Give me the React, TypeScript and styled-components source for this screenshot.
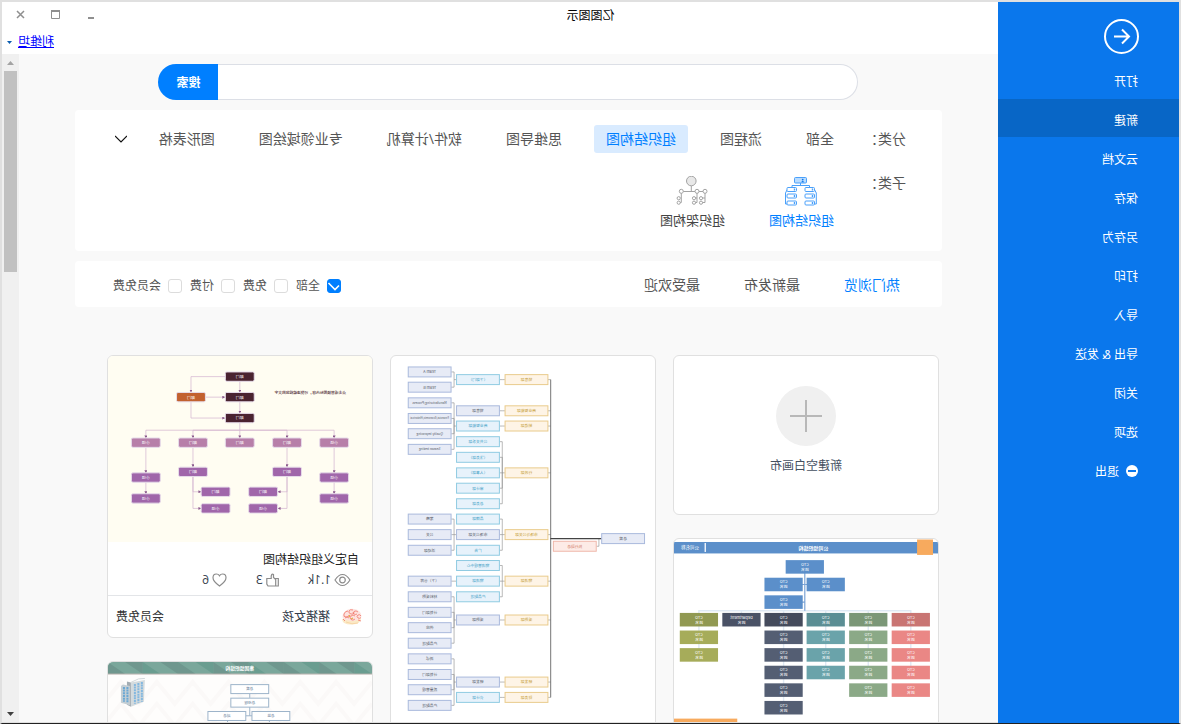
import React, { useState } from "react";
import styled, { createGlobalStyle } from "styled-components";

const GlobalStyle = createGlobalStyle`
  *, *::before, *::after { box-sizing: border-box; }
  body {
    margin: 0;
    background: #ffffff;
    font-family: "Open Sans", "Noto Sans CJK SC", sans-serif;
    font-size: 12px;
    line-height: 20px;
    color: #333333;
  }
  button, input { font-family: inherit; font-size: inherit; line-height: inherit; }
`;

/* ---------- window frame ---------- */

/* The whole window is shown as a mirror image. */
const Frame = styled.div`
  display: flex;
  height: 100vh;
  border: 2px solid #e0e0e0;
  border-bottom: 1px solid #222222;
  background: #ffffff;
  overflow: hidden;
  transform: scaleX(-1);
`;

const Sidebar = styled.nav`
  flex: none;
  width: 181px;
  background: #0a77ec;
  color: #ffffff;
`;

const PlainButton = styled.button`
  display: flex;
  align-items: center;
  margin: 0;
  padding: 0;
  border: 0;
  background: none;
  color: inherit;
  text-align: left;
  white-space: nowrap;
  cursor: pointer;
`;

const BackButton = styled(PlainButton)`
  margin: 17px 0 5px 39px;
`;

const MenuItem = styled(PlainButton)<{ $active?: boolean }>`
  width: 100%;
  height: 38px;
  margin-bottom: 1px;
  padding: 5px 0 0 41px;
  gap: 7px;
  background: ${(p) => (p.$active ? "#0866c6" : "transparent")};
`;

const Workspace = styled.div`
  flex: 1;
  min-width: 0;
  display: flex;
  flex-direction: column;
`;

const TitleBar = styled.header`
  flex: none;
  display: flex;
  height: 26px;
  align-items: center;
`;

const WindowTitle = styled.div`
  flex: 1;
  padding-top: 2px;
  text-align: center;
  color: #000000;
`;

const WindowControls = styled.div`
  width: 181px;
  display: flex;
  justify-content: flex-end;
`;

const ControlButton = styled(PlainButton)`
  width: 36px;
  height: 24px;
  justify-content: center;
`;

const UserBar = styled.div`
  flex: none;
  display: flex;
  align-items: center;
  justify-content: flex-end;
  gap: 6px;
  height: 26px;
  padding: 2px 5px 0 0;
`;

const UserLink = styled.a`
  color: #0000ff;
  text-decoration: underline;
`;

const Body = styled.div`
  flex: 1;
  min-height: 0;
  display: flex;
  border-bottom: 1px solid #e0e0e0;
  background: #f9f9f9;
`;

const Content = styled.main`
  flex: 1;
  min-width: 0;
  padding: 10px 56px 0;
  overflow: hidden;
`;

const ScrollTrack = styled.div`
  flex: none;
  width: 17px;
  display: flex;
  flex-direction: column;
  justify-content: space-between;
  align-items: center;
  background: #f0f0f0;
`;

const ScrollTop = styled.div`
  display: flex;
  flex-direction: column;
  align-items: center;
`;

const ArrowBox = styled.div`
  display: flex;
  align-items: center;
  justify-content: center;
  height: 17px;
`;

const ScrollThumb = styled.div`
  width: 13px;
  height: 201px;
  background: #c1c1c1;
`;

/* ---------- search and filters ---------- */

const SearchForm = styled.form`
  display: flex;
  max-width: 700px;
  height: 36px;
  margin: 0 auto 10px;
`;

const SearchInput = styled.input`
  flex: 1;
  min-width: 0;
  padding: 0 18px;
  border: 1px solid #dcdfe6;
  border-right: 0;
  border-radius: 18px 0 0 18px;
  background: #ffffff;
  outline: none;
`;

const SearchButton = styled.button`
  width: 60px;
  padding: 2px 0 0;
  border: 0;
  border-radius: 0 18px 18px 0;
  background: #007fff;
  color: #ffffff;
  font-weight: 700;
`;

const Panel = styled.section`
  margin-bottom: 10px;
  border-radius: 4px;
  background: #ffffff;
  color: #555555;
  font-size: 14px;
`;

const FilterPanel = styled(Panel)`
  height: 141px;
  padding: 15px 40px 0 36px;
`;

const FilterRow = styled.div`
  display: flex;
  align-items: flex-start;
  margin-bottom: 16px;
`;

const RowLabel = styled.div`
  width: 60px;
  line-height: 28px;
`;

const CategoryList = styled.div`
  flex: 1;
  display: flex;
  gap: 20px;
`;

const Category = styled(PlainButton)<{ $active?: boolean }>`
  height: 28px;
  padding: 0 12px;
  border-radius: 3px;
  background: ${(p) => (p.$active ? "#d9ebff" : "transparent")};
  color: ${(p) => (p.$active ? "#007fff" : "inherit")};
`;

const ExpandButton = styled(PlainButton)`
  height: 28px;
`;

const SubcategoryList = styled.div`
  display: flex;
  gap: 44px;
  padding: 7px 0 0 12px;
`;

const Subcategory = styled(PlainButton)<{ $active?: boolean }>`
  flex-direction: column;
  gap: 2px;
  font-size: 13px;
  color: ${(p) => (p.$active ? "#007fff" : "#444444")};
`;

const SortPanel = styled(Panel)`
  display: flex;
  align-items: center;
  justify-content: space-between;
  height: 46px;
  margin-bottom: 48px;
  padding: 2px 38px 0 42px;
`;

const SortTabs = styled.div`
  display: flex;
  gap: 44px;
`;

const SortTab = styled(PlainButton)<{ $active?: boolean }>`
  color: ${(p) => (p.$active ? "#007fff" : "inherit")};
`;

const PriceFilters = styled.div`
  display: flex;
  gap: 8px;
  padding-top: 1px;
  font-size: 12px;
`;

const CheckLabel = styled.label`
  display: flex;
  align-items: center;
  gap: 7px;
`;

const CheckBoxWrap = styled.span`
  display: grid;
  width: 14px;
  height: 14px;
  > * { grid-area: 1 / 1; }
`;

const CheckBox = styled.input`
  appearance: none;
  width: 14px;
  height: 14px;
  margin: 0;
  border: 1px solid #dcdcdc;
  border-radius: 3px;
  background: #ffffff;
  &:checked { border-color: #007fff; background: #007fff; }
`;

/* ---------- template gallery ---------- */

const Gallery = styled.div`
  display: grid;
  grid-template-columns: repeat(3, minmax(0, 1fr));
  gap: 17px;
  padding: 0 32px 0 3px;
`;

const GalleryColumn = styled.div`
  display: flex;
  flex-direction: column;
  gap: 23px;
`;

const Card = styled.article`
  border: 1px solid #e0e0e0;
  border-radius: 6px;
  background: #ffffff;
  overflow: hidden;
`;

const BlankCard = styled(Card)`
  height: 160px;
`;

const BlankButton = styled(PlainButton)`
  flex-direction: column;
  width: 100%;
  padding-top: 30px;
  gap: 10px;
  color: #444f5f;
`;

const PlusCircle = styled.span`
  display: flex;
  align-items: center;
  justify-content: center;
  width: 60px;
  height: 60px;
  border-radius: 50%;
  background: #f0f0f0;
`;

const Thumb = styled.svg`
  display: block;
  width: 100%;
  height: auto;
  font-family: "Noto Sans CJK SC", sans-serif;
`;

const CardInfo = styled.div`
  padding: 8px 13px 5px;
  border-bottom: 1px solid #e3e5e8;
`;

const CardTitle = styled.h3`
  margin: 0;
  font-size: 12px;
  font-weight: 400;
  color: #222222;
`;

const Stats = styled.div`
  display: flex;
  gap: 29px;
  padding-left: 8px;
  color: #333c4a;
`;

const Stat = styled.span`
  display: flex;
  align-items: center;
  gap: 3px;
`;

const CardFooter = styled.div`
  display: flex;
  align-items: center;
  gap: 11px;
  height: 41px;
  padding: 0 8px 0 10px;
`;

const Author = styled.span`
  flex: 1;
  color: #333c4a;
`;

/* ---------- drawings ---------- */

type NodeProps = {
  x: number;
  y: number;
  w: number;
  h: number;
  fill: string;
  stroke?: string;
  color?: string;
  size?: number;
  radius?: number;
  lines: string[];
};

/* A labelled box centred on (x, y). */
const Node = ({ x, y, w, h, fill, stroke, color = "#fff", size = 4, radius = 0, lines }: NodeProps) => (
  <g>
    <rect x={x - w / 2} y={y - h / 2} width={w} height={h} rx={radius} fill={fill} stroke={stroke} />
    {lines.map((t, i) => (
      <text
        key={i}
        x={x}
        y={y + (i - (lines.length - 1) / 2) * 5 + size * 0.36}
        fontSize={size}
        fill={color}
        textAnchor="middle"
      >
        {t}
      </text>
    ))}
  </g>
);

const rowY = (r: number) => 28 + r * 17.67;
const orgColumns = [
  { x: 27.3, head: "#c97573", body: "#ea8785", count: 4, name: "CTO" },
  { x: 70, head: "#7b9777", body: "#8ba987", count: 4, name: "CTO" },
  { x: 112.7, head: "#5b8e94", body: "#6aa3aa", count: 3, name: "CTO" },
  { x: 155, head: "#454b5c", body: "#545e73", count: 5, name: "CTO" },
  { x: 197.3, head: "#4a5266", body: "#545e73", count: 0, name: "Department" },
  { x: 240, head: "#919952", body: "#a6ac5a", count: 2, name: "CTO" },
];

const OrgChartThumb = () => (
  <Thumb viewBox="0 0 265 230" aria-hidden="true">
    <rect y="3" width="265" height="11.5" fill="#5b8fca" />
    <rect x="5" y="0.5" width="16" height="15.5" fill="#f7aa5e" />
    <text x="125" y="10.6" fontSize="5" fontWeight="700" fill="#fff" textAnchor="middle">公司组织结构</text>
    <rect x="233" y="4" width="1.3" height="9" fill="#fff" />
    <text x="249" y="10.5" fontSize="4.5" fill="#fff" textAnchor="middle">公司名称</text>
    <g stroke="#dfe9f4" strokeWidth="1.4" fill="none">
      <path d="M27.3 81V72H240V116M197.3 81V72M27.3 81V134M70 72V134M112.7 72V134M155 72V169" />
    </g>
    <path d="M133.7 30V72M113 45.7H155M133.7 63.3H155" stroke="#7ba4d5" strokeWidth="1.2" fill="none" />
    {[[133.7, 0], [155, 1], [112.7, 1], [155, 2]].map(([x, r]) => (
      <Node key={`${x}-${r}`} x={x} y={rowY(r)} w={38.4} h={13.6} fill="#5b8fca" lines={["CTO", "姓名"]} />
    ))}
    {orgColumns.map((c) => (
      <g key={c.x}>
        <Node x={c.x} y={rowY(3)} w={38.4} h={13.6} fill={c.head} lines={[c.name, "姓名"]} />
        {Array.from({ length: c.count }, (_, i) => (
          <Node key={i} x={c.x} y={rowY(4 + i)} w={38.4} h={13.6} fill={c.body} lines={["CTO", "姓名"]} />
        ))}
      </g>
    ))}
    <rect x="201.5" y="180.3" width="63.5" height="20" fill="#f7aa5e" />
  </Thumb>
);

type TreeItem = [y: number, text: string, tone: "blue" | "cyan" | "amber" | "rose", size?: number];
const tones = {
  blue: { fill: "#e7ebf6", stroke: "#a9b9dc", color: "#555a66" },
  cyan: { fill: "#e7f2fb", stroke: "#8fcbe2", color: "#3f9fc6" },
  amber: { fill: "#fef4e6", stroke: "#e9cb8c", color: "#c49a32" },
  rose: { fill: "#fdebe7", stroke: "#efb8ab", color: "#cf7560" },
};

const level1: TreeItem[] = [
  [23.7, "销售部", "amber"], [55, "商业智能部", "amber"], [70.3, "制造部", "amber"],
  [117.3, "行政部", "amber"], [179.3, "市场与公关部", "amber"], [226, "物流部", "amber"],
  [265, "采购部", "amber"], [327.3, "研发部", "amber"], [342.7, "财务部", "amber"],
];
const level2: TreeItem[] = [
  [23.7, "（下部门）", "cyan"], [55, "销售部", "blue"], [70.3, "商业智能部", "cyan"],
  [86, "公共关系部", "cyan"], [101.7, "（法务部）", "cyan"], [117.3, "（人事部）", "cyan"],
  [132.7, "审计部", "cyan"], [148.3, "总务部", "cyan"], [163.7, "品牌部", "cyan"],
  [179.3, "市场公关部", "blue"], [195, "广告", "cyan"], [210.3, "物流管理中心", "cyan"],
  [226, "物流部", "cyan"], [241.7, "产品配送", "cyan"], [265, "采购部", "blue"],
  [327.3, "研发部", "blue"], [342.7, "会计部", "cyan"],
];
const level3: TreeItem[] = [
  [16, "Team A", "blue"], [31.3, "Team B", "blue"], [47, "Manufacturing/Process", "blue", 3.2],
  [62.7, "Financial/Economic/Historical", "blue", 2.8], [78, "Quality improving", "blue", 3.2], [93.7, "Season testing", "blue", 3.2],
  [163.7, "策略", "blue"], [179.3, "公关", "blue"], [195, "活动部", "blue"],
  [226, "（下）仓库", "blue"], [241.7, "材料采购", "blue"], [257.3, "计划部门", "blue"],
  [272.7, "供应", "blue"], [288.3, "产品配送", "blue"], [304, "测试", "blue"],
  [319.7, "计划部门", "blue"], [335, "质量管理", "blue"], [350.7, "产品配送", "blue"],
];
const branches12: [number, number[]][] = [
  [23.7, [23.7]], [55, [55]], [70.3, [70.3]], [117.3, [86, 101.7, 117.3, 132.7, 148.3]],
  [179.3, [163.7, 179.3, 195]], [226, [210.3, 226, 241.7]], [265, [265]], [327.3, [327.3]], [342.7, [342.7]],
];
const branches23: [number, number[]][] = [
  [23.7, [16, 31.3]], [70.3, [47, 62.7, 78, 93.7]], [179.3, [163.7, 179.3, 195]],
  [226, [226]], [265, [241.7, 257.3, 272.7, 288.3]], [327.3, [304, 319.7, 335, 350.7]],
];

const branchPath = (from: number, mid: number, to: number, groups: [number, number[]][]) =>
  groups
    .map(([y, kids]) => `M${from} ${y}H${mid}` + kids.map((k) => `M${mid} ${y}V${k}H${to}`).join(""))
    .join("");

const TreeNodes = ({ x, items }: { x: number; items: TreeItem[] }) => (
  <>
    {items.map(([y, text, tone, size = 3.8]) => (
      <Node key={y} x={x} y={y} w={43} h={10} {...tones[tone]} size={size} lines={[text]} />
    ))}
  </>
);

const TreeThumb = () => (
  <Thumb viewBox="0 0 265 420" aria-hidden="true">
    <g stroke="#8a8a8a" strokeWidth="0.6" fill="none">
      <path d={branchPath(150.7, 153.3, 156, branches12)} />
      <path d={branchPath(199.7, 201.7, 204.5, branches23)} />
      <path d={level1.map(([y]) => `M104.7 ${y}H107.5`).join("")} />
      <path d="M53.7 183.3H56.3V191H58.7" />
    </g>
    <path d="M104.7 23.7V342.7" stroke="#666" strokeWidth="0.9" />
    <path d="M53.7 183.3H105" stroke="#444" strokeWidth="1.2" />
    <TreeNodes x={32} items={[[183.3, "总裁", "blue"]]} />
    <TreeNodes x={80.5} items={[[191, "执行副总", "rose"]]} />
    <TreeNodes x={129} items={level1} />
    <TreeNodes x={177.7} items={level2} />
    <TreeNodes x={226.2} items={level3} />
  </Thumb>
);

const CustomOrgThumb = () => {
  const node = (x: number, y: number, fill: string, text = "部门") => (
    <Node key={`${x}-${y}`} x={x} y={y} w={29} h={9.4} radius={1.5} fill={fill} stroke="#e6dcea" size={4} lines={[text]} />
  );
  return (
    <Thumb viewBox="0 0 265 187" aria-hidden="true">
      <defs>
        <marker id="tip" viewBox="0 0 4 4" refX="3" refY="2" markerWidth="3" markerHeight="3" markerUnits="userSpaceOnUse" orient="auto">
          <path d="M0 0L4 2L0 4Z" fill="#8a5a8c" />
        </marker>
      </defs>
      <rect width="265" height="187" fill="#fffdf2" />
      <g stroke="#d3b3d0" strokeWidth="0.7" fill="none">
        {[
          "M132.7 20V36", "M132.7 41V57", "M147 20.7H181.7V36", "M167 41.3H148", "M181.7 46V62.3H148",
          "M132.7 67V82", "M132.7 74.5H38V82", "M132.7 74.5H85.3V82", "M132.7 74.5H179.7V82", "M132.7 74.5H227V82",
          "M38 92V117", "M38 127V138", "M227 92V117", "M227 127V138", "M85.3 92V111", "M179.7 92V111",
          "M85.3 121V136.3H94", "M85.3 121V153H94", "M179.7 121V136.3H172", "M179.7 121V153H172",
        ].map((d) => (
          <path key={d} d={d} markerEnd="url(#tip)" />
        ))}
      </g>
      {[20.7, 41.3, 62.3].map((y) => node(132.7, y, "#4a2330"))}
      {node(181.7, 41.3, "#c2612f")}
      {[38, 85.3, 132.7, 179.7, 227].map((x) => node(x, 87, "#b77fa9", x === 38 || x === 227 ? "小组" : "部门"))}
      {[[38, 122], [38, 143], [85.3, 116.3], [179.7, 116.3], [227, 122], [227, 143], [109.3, 136.3], [109.3, 153], [157, 136.3], [157, 153]].map(
        ([x, y]) => node(x, y, "#a066aa", y === 116.3 || y === 136.3 ? "部门" : "小组")
      )}
      <text x="62" y="38.2" fontSize="3.8" fontWeight="500" fill="#4a2330" textAnchor="middle">
        点击或替换图标内容，可快速编辑您的文字
      </text>
    </Thumb>
  );
};

const CompanyThumb = () => (
  <Thumb viewBox="0 0 265 120" aria-hidden="true">
    <rect width="265" height="120" fill="#fefdfc" />
    <g stroke="#fbf9f8" strokeWidth="4" fill="none">
      {[20, 42, 64, 86].map((y) => (
        <path key={y} d={`M0 ${y}` + Array.from({ length: 15 }, (_, i) => `L${(i + 1) * 18} ${y + (i % 2 ? 0 : 22)}`).join("")} />
      ))}
    </g>
    <rect width="265" height="12" fill="#7aa79b" />
    {Array.from({ length: 15 }, (_, i) => (
      <path
        key={i}
        d={i % 2 ? `M${i * 17.7} 0h17.7L${i * 17.7} 12Z` : `M${i * 17.7} 12h17.7V0Z`}
        fill={i % 3 ? "#6f978e" : "#6a9d90"}
      />
    ))}
    <rect y="11.6" width="265" height="1" fill="#b9b4ae" />
    <text x="132.7" y="8.4" fontSize="4.8" fontWeight="700" fill="#fff" textAnchor="middle">集团组织结构</text>
    <path d="M122.7 32V36M122.7 45V54M120 54H127M103 59V66M145 59V66" stroke="#9db4ca" fill="none" />
    {([[122.7, 27.2, "总裁"], [122.7, 40.8, "总经理"], [145.7, 54.2, "副总"], [101.5, 54.2, "总监"]] as [number, number, string][]).map(
      ([x, y, t]) => <Node key={t} x={x} y={y} w={38} h={9} fill="#fff" stroke="#9db4ca" color="#5c7894" size={3.6} lines={[t]} />
    )}
    <path d="M228 18L242 20.5V45L229 40Z" fill="#d3dadd" />
    <path d="M242 20.5L246 19.5V43L242 45Z" fill="#a3acb2" />
    <path d="M243 24L250 22.5L252 24V41L243 43.5Z" fill="#c4ced4" />
    <path d="M228 16.5Q234 15.5 242 20.5" stroke="#d3d8da" strokeWidth="1" fill="none" />
    <path d="M231 20V40M234.5 21V41M238 22V42" stroke="#84b8df" strokeWidth="2" strokeDasharray="2 0.7" />
    <path d="M245.5 25V41M249 25V40" stroke="#6ba8d4" strokeWidth="2" strokeDasharray="2 0.7" />
  </Thumb>
);

const OrgStructureIcon = () => (
  <svg width="32" height="32" viewBox="0 0 32 32" fill="none" stroke="#4aa0fa" aria-hidden="true">
    <rect x="10.5" y="1.5" width="12" height="5.5" rx="1" fill="#b9dcff" />
    <circle cx="14.3" cy="3.6" r="0.9" fill="#0a77ec" stroke="none" />
    <path d="M12.8 6.2q1.5-2.4 3 0z" fill="#0a77ec" stroke="none" />
    <path d="M16.5 7v2.5M7.5 11.500V9.500H25V11.500M2.5 13.500L.7 17V28h1.8M29.800 13.500L31.500 17V28h-1.800" />
    {[11.5, 18, 25].map((y) => (
      <g key={y} fill="#ffffff">
        <rect x="2.5" y={y} width="9.5" height="4" rx="1" />
        <rect x="20.5" y={y} width="9.5" height="4" rx="1" />
        <path d={`M4.5 ${y + 1}v2M22.5 ${y + 1}v2`} strokeWidth="1.4" />
      </g>
    ))}
  </svg>
);

const OrgFrameworkIcon = () => (
  <svg width="32" height="32" viewBox="0 0 32 32" fill="none" stroke="#a3a3a3" aria-hidden="true">
    <path d="M16.7 10v5M3 15.5h24M3 15v11.5h3M11 15v11.5h3M26.7 15v11.5h1.5M3 22h3M11 22h3" />
    <circle cx="16.7" cy="5" r="4.8" fill="#e8e8e8" />
    <g fill="#ffffff">
      {[3, 11, 26.7].map((x) => <circle key={x} cx={x} cy="15.3" r="2" />)}
      {[7, 14, 29.3].map((x) => (
        <g key={x}>
          <circle cx={x} cy="22.2" r="1.6" />
          <circle cx={x} cy="26.7" r="1.6" />
        </g>
      ))}
    </g>
  </svg>
);

const AvatarIcon = () => (
  <svg width="21" height="17" viewBox="0 0 21 17" aria-hidden="true">
    <path d="M1 10q0 6 9 6.5t10-5l-3-2-7 3z" fill="#fbe9c6" />
    <path d="M.5 8Q1 2 8 1t11 5q2 5-3 6-8 2-13-.5Q.3 10 .5 8z" fill="#fde3df" />
    <g stroke="#f0776b" strokeWidth="0.8" fill="none">
      <path d="M1 8q1-2 3-1t0 3q-2 1-3-.5M4 4q2-2 4-.5T8 6 5 6M9 2q3-1 4 1t-2 3-3-2M14 3q3 0 4 3t-2 3-3-2M7 8q2-2 4 0t0 3.5T7 11M13 10q2-2 4 0M1 13l3-1M17 13l2-2" />
    </g>
    <path d="M9 10l2 1M12 7l1 2" stroke="#e0aa45" strokeWidth="1.200" />
    <path d="M4 15q6 2 12-1" stroke="#f6d6a6" strokeWidth="1" fill="none" />
  </svg>
);

const menu = ["打开", "新建", "云文档", "保存", "另存为", "打印", "导入", "导出 & 发送", "关闭", "选项"];
const categories = ["全部", "流程图", "组织结构图", "思维导图", "软件/计算机", "专业领域绘图", "图形表格"];
const sorts = ["热门浏览", "最新发布", "最受欢迎"];
const prices = ["全部", "免费", "付费", "会员免费"];

export default function App() {
  const [section, setSection] = useState("新建");
  const [category, setCategory] = useState("组织结构图");
  const [sort, setSort] = useState("热门浏览");
  const [price, setPrice] = useState("全部");

  return (
    <>
      <GlobalStyle />
      <Frame>
        <Sidebar>
          <BackButton aria-label="返回">
            <svg width="37" height="36" viewBox="0 0 37 36" fill="none" stroke="#fff" strokeWidth="2">
              <circle cx="18.5" cy="17.5" r="16.5" />
              <path d="M26 17.5H11.5M18 10.5l-7 7 7 7" />
            </svg>
          </BackButton>
          {menu.map((m) => (
            <MenuItem key={m} $active={m === section} onClick={() => setSection(m)}>{m}</MenuItem>
          ))}
          <MenuItem>
            <svg width="12" height="14" viewBox="0 0 12 14" aria-hidden="true">
              <circle cx="6" cy="6" r="6" fill="#fff" />
              <rect x="2" y="5" width="8" height="2" fill="#0a77ec" />
            </svg>
            退出
          </MenuItem>
        </Sidebar>

        <Workspace>
          <TitleBar>
            <WindowTitle>亿图图示</WindowTitle>
            <WindowControls>
              <ControlButton aria-label="最小化">
                <svg width="10" height="10" viewBox="0 0 10 10"><rect x="3" y="7" width="6" height="2" fill="#8f8f8f" /></svg>
              </ControlButton>
              <ControlButton aria-label="最大化">
                <svg width="10" height="10" viewBox="0 0 10 10"><path d="M1.500 0V8.500H9.500V0" fill="none" stroke="#8f8f8f" /><rect x="1" width="9" height="2" fill="#8f8f8f" /></svg>
              </ControlButton>
              <ControlButton aria-label="关闭窗口">
                <svg width="10" height="10" viewBox="0 0 10 10"><path d="M1 1l7 7M8 1l-7 7" stroke="#8f8f8f" strokeWidth="1.500" /></svg>
              </ControlButton>
            </WindowControls>
          </TitleBar>
          <UserBar>
            <UserLink href="#user">利维坦</UserLink>
            <svg width="5" height="3" viewBox="0 0 5 3" aria-hidden="true"><path d="M0 0h5L2.5 3z" fill="#0a5db0" /></svg>
          </UserBar>

          <Body>
            <Content>
              <SearchForm onSubmit={(e) => e.preventDefault()}>
                <SearchInput aria-label="搜索模板" />
                <SearchButton type="submit">搜索</SearchButton>
              </SearchForm>

              <FilterPanel>
                <FilterRow>
                  <RowLabel>分类：</RowLabel>
                  <CategoryList>
                    {categories.map((c) => (
                      <Category key={c} $active={c === category} onClick={() => setCategory(c)}>{c}</Category>
                    ))}
                  </CategoryList>
                  <ExpandButton aria-label="展开">
                    <svg width="12" height="8" viewBox="0 0 12 8"><path d="M0 1l6 6L12 1" fill="none" stroke="#111" strokeWidth="1.200" /></svg>
                  </ExpandButton>
                </FilterRow>
                <FilterRow>
                  <RowLabel>子类：</RowLabel>
                  <SubcategoryList>
                    <Subcategory $active><OrgStructureIcon />组织结构图</Subcategory>
                    <Subcategory><OrgFrameworkIcon />组织架构图</Subcategory>
                  </SubcategoryList>
                </FilterRow>
              </FilterPanel>

              <SortPanel>
                <SortTabs>
                  {sorts.map((s) => (
                    <SortTab key={s} $active={s === sort} onClick={() => setSort(s)}>{s}</SortTab>
                  ))}
                </SortTabs>
                <PriceFilters>
                  {prices.map((p) => (
                    <CheckLabel key={p}>
                      <CheckBoxWrap>
                        <CheckBox type="checkbox" checked={p === price} onChange={() => setPrice(p)} />
                        {p === price && (
                          <svg width="14" height="14" viewBox="0 0 14 14" pointerEvents="none" aria-hidden="true">
                            <path d="M2 6.5l4 4L12.5 4" fill="none" stroke="#fff" strokeWidth="1.6" />
                          </svg>
                        )}
                      </CheckBoxWrap>
                      {p}
                    </CheckLabel>
                  ))}
                </PriceFilters>
              </SortPanel>

              <Gallery>
                <GalleryColumn>
                  <BlankCard>
                    <BlankButton>
                      <PlusCircle>
                        <svg width="32" height="32" viewBox="0 0 32 32" aria-hidden="true">
                          <path d="M16 0v32M0 16h32" stroke="#b8b8b8" strokeWidth="2" />
                        </svg>
                      </PlusCircle>
                      新建空白画布
                    </BlankButton>
                  </BlankCard>
                  <Card><OrgChartThumb /></Card>
                </GalleryColumn>
                <GalleryColumn>
                  <Card><TreeThumb /></Card>
                </GalleryColumn>
                <GalleryColumn>
                  <Card>
                    <CustomOrgThumb />
                    <CardInfo>
                      <CardTitle>自定义组织结构图</CardTitle>
                      <Stats>
                        <Stat>
                          <svg width="17" height="14" viewBox="0 0 17 14" fill="none" stroke="#8c8c8c" strokeWidth="1.2" aria-hidden="true">
                            <path d="M1 7q3.5-5.5 7.5-5.5T16 7q-3.5 5.5-7.5 5.5T1 7z" />
                            <circle cx="8.5" cy="7" r="2.8" />
                          </svg>
                          1.1k
                        </Stat>
                        <Stat>
                          <svg width="13" height="14" viewBox="0 0 13 14" fill="none" stroke="#8c8c8c" strokeWidth="1.2" aria-hidden="true">
                            <path d="M.7 5.5h2.6v7.5H.7zM3.300 6.500L5.500 4.500V1.500q1.800-1 2.300 1.500V5.500h4.400v5.500l-1.200 2H3.300" />
                          </svg>
                          3
                        </Stat>
                        <Stat>
                          <svg width="15" height="14" viewBox="0 0 15 14" fill="none" stroke="#8c8c8c" strokeWidth="1.2" aria-hidden="true">
                            <path d="M7.5 13Q1 8.5 1 4.8 1 1 4.3 1 6.5 1 7.5 2.8 8.5 1 10.7 1 14 1 14 4.8 14 8.5 7.5 13z" />
                          </svg>
                          6
                        </Stat>
                      </Stats>
                    </CardInfo>
                    <CardFooter>
                      <AvatarIcon />
                      <Author>猪猪女孩</Author>
                      <span>会员免费</span>
                    </CardFooter>
                  </Card>
                  <Card><CompanyThumb /></Card>
                </GalleryColumn>
              </Gallery>
            </Content>

            <ScrollTrack aria-hidden="true">
              <ScrollTop>
                <ArrowBox>
                  <svg width="7" height="4" viewBox="0 0 7 4"><path d="M0 4h7L3.5 0z" fill="#a3a3a3" /></svg>
                </ArrowBox>
                <ScrollThumb />
              </ScrollTop>
              <ArrowBox>
                <svg width="7" height="4" viewBox="0 0 7 4"><path d="M0 0h7L3.5 4z" fill="#404040" /></svg>
              </ArrowBox>
            </ScrollTrack>
          </Body>
        </Workspace>
      </Frame>
    </>
  );
}
